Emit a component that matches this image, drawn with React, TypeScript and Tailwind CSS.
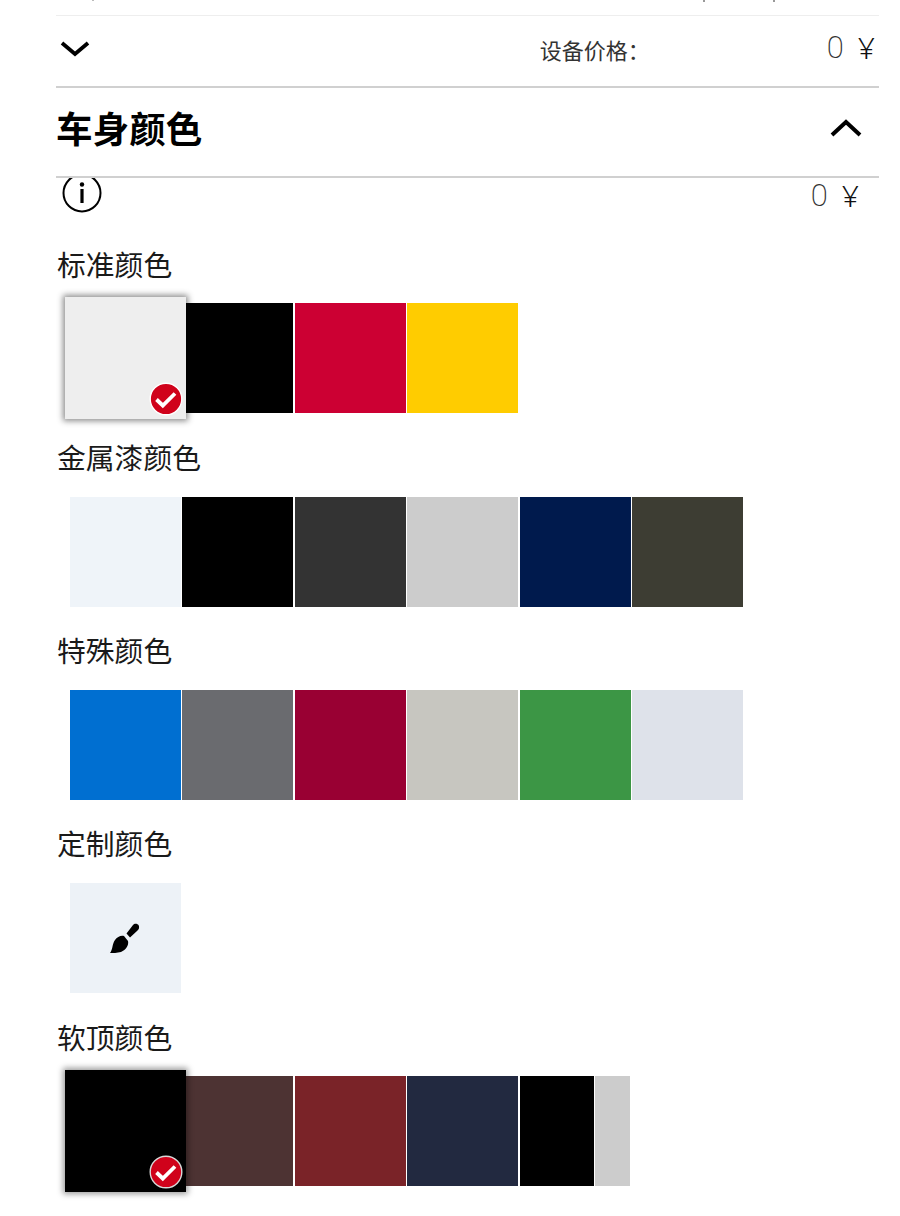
const Check = ({ ring }: { ring: string }) => (
  <svg width="34" height="34" viewBox="0 0 34 34" className="absolute right-[3px] bottom-[3px]">
    <circle cx="17" cy="17" r="15.8" fill="#d0021b" stroke={ring} strokeWidth="1.4" />
    <path d="M7.5 17.5 L13.8 23.5 L26 11.5" fill="none" stroke="#fff" strokeWidth="3.8" />
  </svg>
);

const Swatch = ({ c }: { c: string }) => <div className="w-[111px] h-[110px] shrink-0" style={{ backgroundColor: c }} />;

const Label = ({ children, className }: { children: string; className: string }) => (
  <div className={`text-[28.8px] leading-[38px] pl-[1px] text-[#1a1a1a] ${className}`}>{children}</div>
);

const Price = () => (
  <span className="leading-[36px] font-light text-[#333] flex items-center gap-[14px]">
    <span className="text-[31px] font-extralight" style={{ fontFamily: "Roboto, sans-serif" }}>0</span>
    <span className="text-[#111] text-[30px] font-light" style={{ fontFamily: '"Noto Sans", sans-serif' }}>¥</span>
  </span>
);

const Row = ({ colors }: { colors: string[] }) => (
  <div className="flex gap-[1.4px] pl-[14px]">
    {colors.map((c) => (
      <Swatch key={c} c={c} />
    ))}
  </div>
);

export default function App() {
  return (
    <div
      className="relative w-[900px] h-[1216px] overflow-hidden bg-white pl-[56px] pr-[21px]"
      style={{ fontFamily: '"Liberation Sans", "Noto Sans CJK SC", sans-serif' }}
    >
      <div className="absolute left-[92px] top-0 w-[2px] h-[1px] bg-[#bbbbbb]" />
      <div className="absolute left-[703px] top-0 w-[2px] h-[2px] bg-[#999999]" />
      <div className="absolute left-[773px] top-0 w-[2px] h-[2px] bg-[#999999]" />

      <div className="h-[16px] border-b border-[#eeeeee]" />

      <div className="h-[72px] border-b-2 border-[#d0d0d0] flex justify-between pl-[4px] pr-[4px]">
        <svg width="30" height="16" viewBox="0 0 30 16" className="mt-[25px]">
          <path d="M2 2 L15 13 L28 2" fill="none" stroke="#000" strokeWidth="3.8" />
        </svg>
        <div className="flex items-start">
          <span className="text-[22px] leading-[30px] mt-[21px] text-[#333] mr-[177px]">设备价格：</span>
          <div className="mt-[14px]"><Price /></div>
        </div>
      </div>

      <div className="h-[90px] border-b-2 border-[#d0d0d0] flex justify-between items-center pr-[17px]">
        <span className="text-[36.6px] leading-[50px] font-bold text-black mt-[-3px]">车身颜色</span>
        <svg width="32" height="18" viewBox="0 0 32 18" className="mt-[-9px]">
          <path d="M2 16 L16 3 L30 16" fill="none" stroke="#000" strokeWidth="4" />
        </svg>
      </div>

      <div className="h-[69px] flex justify-between items-start pl-[6px] pr-[4px]">
        <div className="h-[36px] w-[40px] overflow-hidden">
          <svg width="40" height="40" viewBox="0 0 40 40" className="-mt-[5px]">
            <circle cx="20" cy="20" r="18.5" fill="none" stroke="#000" strokeWidth="2" />
            <circle cx="20" cy="11.5" r="2.2" fill="#000" />
            <rect x="18.4" y="16" width="3.2" height="14" fill="#000" />
          </svg>
        </div>
        <div className="mr-[16px]"><Price /></div>
      </div>

      <Label className="">标准颜色</Label>
      <div className="flex gap-[1.4px] pl-[14px] mt-[18px] h-[110px]">
        <div className="relative z-10 w-[121px] h-[122px] shrink-0 -ml-[5px] -mr-[5px] -mt-[6px] bg-[#eeeeee] shadow-[0_0_6px_2px_rgba(0,0,0,0.45)]">
          <Check ring="#ffffff" />
        </div>
        <Swatch c="#000000" />
        <Swatch c="#cc0033" />
        <Swatch c="#ffcc00" />
      </div>

      <Label className="mt-[27px]">金属漆颜色</Label>
      <div className="mt-[19px]">
        <Row colors={["#eff4f9", "#000000", "#333333", "#cccccc", "#001a4d", "#3d3d33"]} />
      </div>

      <Label className="mt-[26px]">特殊颜色</Label>
      <div className="mt-[19px]">
        <Row colors={["#006fd1", "#6a6b6f", "#990033", "#c7c6c0", "#3c9645", "#dee2ea"]} />
      </div>

      <Label className="mt-[26px]">定制颜色</Label>
      <div className="ml-[14px] mt-[19px] w-[111px] h-[110px] bg-[#edf2f7] flex items-center justify-center">
        <svg width="32" height="32" viewBox="0 0 32 32" className="-ml-[1px]">
          <path d="M1 31 C4 27 3 22 6 18 C8 15 12 13 15 14 L19 19 C20 23 17 28 12 30 C8 31 4 31 1 31 Z" fill="#000" />
          <path d="M17.5 11.5 L24 3 C26 0.5 31 2 30 6 C30 7 29 8 28 9 L21 15.5 Z" fill="#000" />
        </svg>
      </div>

      <Label className="mt-[27px]">软顶颜色</Label>
      <div className="flex gap-[1.4px] pl-[14px] mt-[18px] h-[110px]">
        <div className="relative z-10 w-[121px] h-[122px] shrink-0 -ml-[5px] -mr-[5px] -mt-[6px] bg-black shadow-[0_0_6px_2px_rgba(0,0,0,0.4)]">
          <Check ring="#d8d8d8" />
        </div>
        <Swatch c="#4d3333" />
        <Swatch c="#7a2328" />
        <Swatch c="#222940" />
        <div className="w-[111px] h-[110px] shrink-0 flex">
          <div className="w-[74px] bg-black" />
          <div className="w-[35px] ml-[1px] bg-[#cccccc]" />
        </div>
      </div>
    </div>
  );
}
